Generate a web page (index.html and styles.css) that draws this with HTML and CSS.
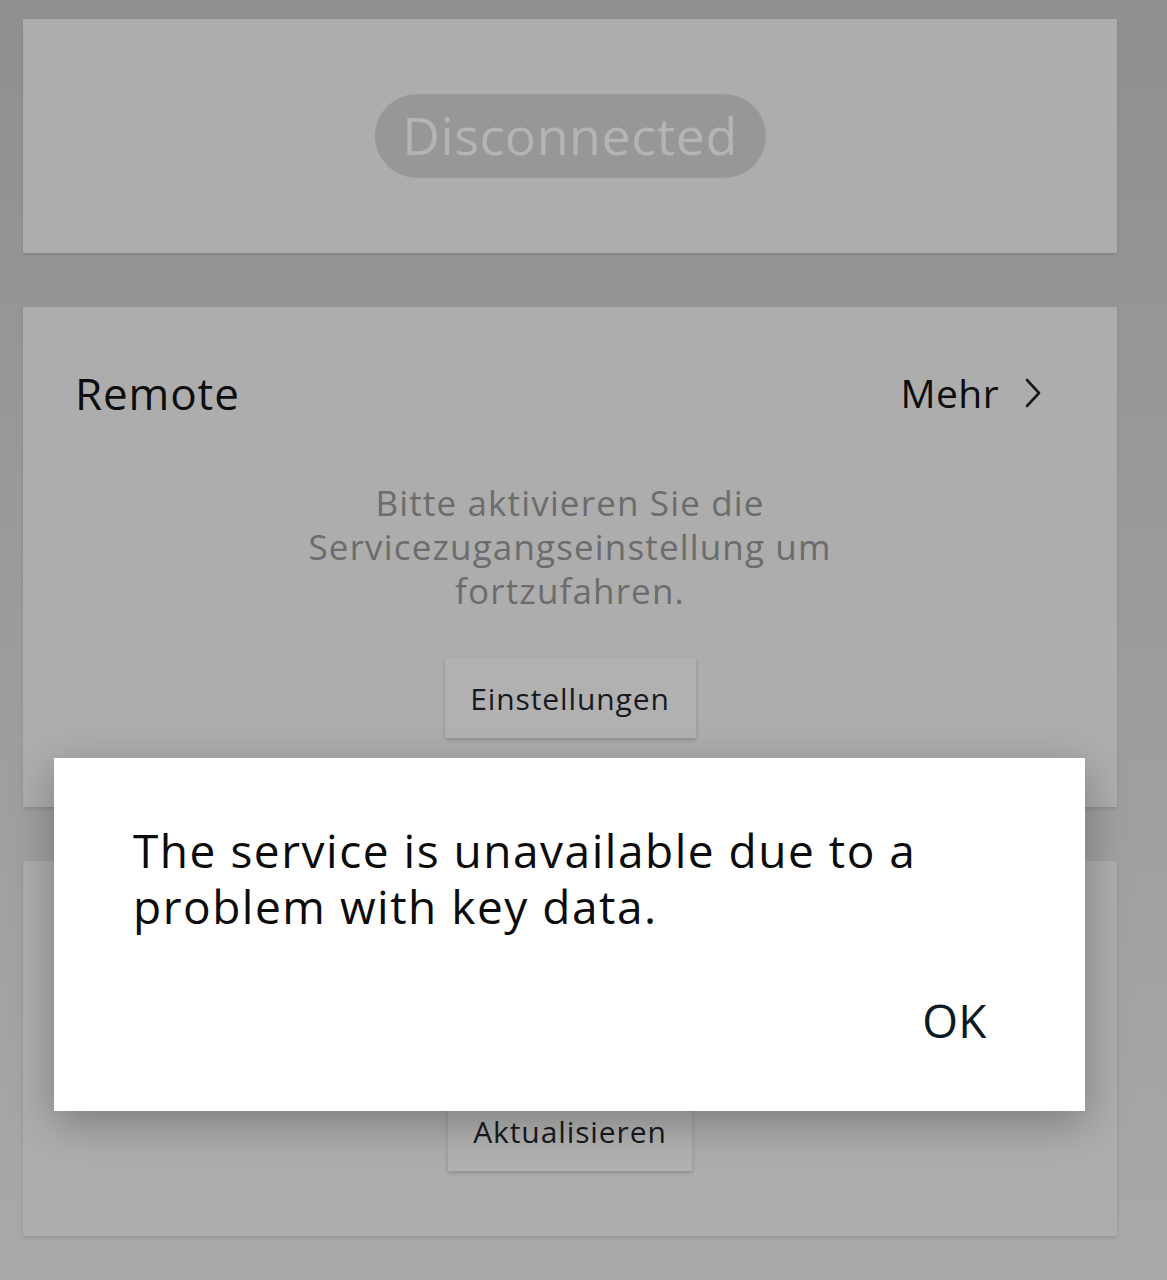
FILE: index.html
```html
<!DOCTYPE html>
<html lang="de">
<head>
    <meta charset="UTF-8">
    <meta name="viewport" content="width=device-width, initial-scale=1.0">
    <title>Remote</title>
    <link rel="stylesheet" href="styles.css">
</head>
<body>
    <div class="screen">
        <section class="card card-status">
            <span class="status-pill">Disconnected</span>
        </section>

        <section class="card card-remote">
            <header class="card-head">
                <h2 class="card-title">Remote</h2>
                <a class="more-link" href="#">
                    Mehr
                    <svg class="chevron" width="20" height="32" viewBox="0 0 20 32">
                        <polyline points="4,3 16,16 4,29" fill="none" stroke="#1a1a1a" stroke-width="2.6" stroke-linecap="round" stroke-linejoin="round"/>
                    </svg>
                </a>
            </header>
            <p class="card-text">Bitte aktivieren Sie die Servicezugangseinstellung um fortzufahren.</p>
            <button class="flat-btn">Einstellungen</button>
        </section>

        <section class="card card-update">
            <button class="flat-btn">Aktualisieren</button>
        </section>
    </div>

    <div class="dialog">
        <p class="dialog-text">The service is unavailable due to a problem with key data.</p>
        <div class="dialog-actions">
            <button class="dialog-btn">OK</button>
        </div>
    </div>
</body>
</html>
```

FILE: styles.css
```css
* {
    margin: 0;
    padding: 0;
    box-sizing: border-box;
}

body {
    font-family: 'Open Sans', 'Noto Sans', sans-serif;
    letter-spacing: 0.03em;
    background: linear-gradient(180deg, #8f8f8f 0%, #979797 30%, #a1a1a1 70%, #a9a9a9 100%);
    min-height: 1280px;
    color: #111;
}

.screen {
    width: 1094px;
    margin-left: 23px;
    padding-top: 19px;
    display: flex;
    flex-direction: column;
    gap: 54px;
}

.card {
    background: #adadad;
    box-shadow: 0 2px 3px rgba(0,0,0,0.12);
}

.card-status {
    height: 234px;
    display: flex;
    align-items: center;
    justify-content: center;
}

.status-pill {
    display: inline-block;
    width: 391px;
    height: 84px;
    line-height: 82px;
    text-align: center;
    border-radius: 42px;
    background: #979797;
    color: #b4b4b4;
    font-size: 52px;
    letter-spacing: 0.01em;
}

.card-remote {
    height: 500px;
    padding: 60px 52px 0;
    display: flex;
    flex-direction: column;
    align-items: center;
}

.card-head {
    width: 100%;
    padding-right: 22px;
    display: flex;
    justify-content: space-between;
    align-items: center;
}

.card-title {
    font-weight: 400;
    font-size: 44px;
    line-height: 52px;
    color: #0d0d0d;
    letter-spacing: 0.02em;
}

.more-link {
    display: flex;
    align-items: center;
    gap: 24px;
    font-size: 39px;
    line-height: 52px;
    color: #0d0d0d;
    text-decoration: none;
    letter-spacing: 0.01em;
}

.card-text {
    width: 600px;
    margin-top: 62px;
    text-align: center;
    font-size: 35px;
    line-height: 44px;
    color: #6c6c6c;
    letter-spacing: 0.033em;
}

.flat-btn {
    font-family: inherit;
    letter-spacing: 0.03em;
    border: none;
    background: #b1b1b1;
    box-shadow: 0 2px 4px rgba(0,0,0,0.18);
    height: 80px;
    padding: 0 20px;
    font-size: 30px;
    color: #151a1f;
}

.card-remote .flat-btn {
    margin-top: 45px;
    width: 251px;
}

.card-update {
    height: 375px;
    display: flex;
    flex-direction: column;
    align-items: center;
    padding-top: 230px;
}

.card-update .flat-btn {
    width: 244px;
}

.dialog {
    position: absolute;
    left: 54px;
    top: 758px;
    width: 1031px;
    height: 353px;
    background: #fff;
    box-shadow: 0 12px 40px rgba(0,0,0,0.28);
    padding: 64px 60px 0 79px;
}

.dialog-text {
    font-size: 46px;
    line-height: 56px;
    color: #0b0b0b;
    letter-spacing: 0.033em;
}

.dialog-actions {
    display: flex;
    justify-content: flex-end;
    margin-top: 58px;
    padding-right: 20px;
}

.dialog-btn {
    font-family: inherit;
    letter-spacing: 0.01em;
    border: none;
    background: none;
    font-size: 46px;
    line-height: 56px;
    color: #0c1a24;
    padding: 0 18px;
}
```
